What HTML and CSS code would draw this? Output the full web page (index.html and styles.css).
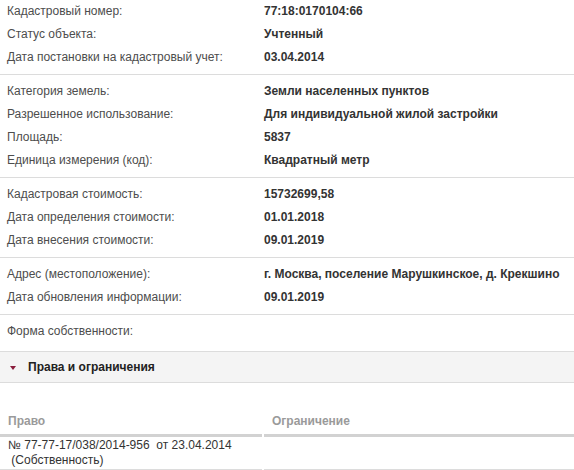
FILE: index.html
```html
<!DOCTYPE html>
<html lang="ru">
<head>
<meta charset="utf-8">
<title>Объект</title>
<link rel="stylesheet" href="styles.css">
</head>
<body>
<div class="info">
  <div class="group first">
    <div class="row"><span class="label">Кадастровый номер:</span><span class="value">77:18:0170104:66</span></div>
    <div class="row"><span class="label">Статус объекта:</span><span class="value">Учтенный</span></div>
    <div class="row"><span class="label">Дата постановки на кадастровый учет:</span><span class="value">03.04.2014</span></div>
  </div>
  <div class="group">
    <div class="row"><span class="label">Категория земель:</span><span class="value">Земли населенных пунктов</span></div>
    <div class="row"><span class="label">Разрешенное использование:</span><span class="value">Для индивидуальной жилой застройки</span></div>
    <div class="row"><span class="label">Площадь:</span><span class="value">5837</span></div>
    <div class="row"><span class="label">Единица измерения (код):</span><span class="value">Квадратный метр</span></div>
  </div>
  <div class="group">
    <div class="row"><span class="label">Кадастровая стоимость:</span><span class="value">15732699,58</span></div>
    <div class="row"><span class="label">Дата определения стоимости:</span><span class="value">01.01.2018</span></div>
    <div class="row"><span class="label">Дата внесения стоимости:</span><span class="value">09.01.2019</span></div>
  </div>
  <div class="group">
    <div class="row"><span class="label">Адрес (местоположение):</span><span class="value">г. Москва, поселение Марушкинское, д. Крекшино</span></div>
    <div class="row"><span class="label">Дата обновления информации:</span><span class="value">09.01.2019</span></div>
  </div>
  <div class="group last">
    <div class="row"><span class="label">Форма собственности:</span><span class="value"></span></div>
  </div>
</div>
<div class="section-head">
  <span class="caret"></span>
  <span class="section-title">Права и ограничения</span>
</div>
<div class="rights">
  <div class="th">Право</div>
  <div class="th">Ограничение</div>
  <div class="td">№ 77-77-17/038/2014-956&nbsp; от 23.04.2014<br>&nbsp;(Собственность)</div>
  <div class="td"></div>
</div>
</body>
</html>
```

FILE: styles.css
```css
html, body {
  margin: 0;
  padding: 0;
  background: #fff;
}
body {
  font-family: "Liberation Sans", Arial, sans-serif;
  font-size: 12px;
  color: #333;
  width: 574px;
}
.group {
  padding: 5px 0;
  border-bottom: 1px solid #dcdcdc;
}
.group.first {
  padding-top: 0;
}
.group.last {
  border-bottom: none;
  padding-bottom: 0;
}
.row {
  display: grid;
  grid-template-columns: 257px 1fr;
  padding-left: 7px;
  line-height: 23px;
  height: 23px;
}
.label {
  color: #4d4d4d;
}
.value {
  font-weight: bold;
  color: #333;
}
.section-head {
  margin-top: 8px;
  height: 30px;
  background: #f4f4f4;
  border-top: 1px solid #dcdcdc;
  border-bottom: 1px solid #dcdcdc;
  display: flex;
  align-items: center;
  padding-left: 10px;
}
.caret {
  width: 0;
  height: 0;
  border-left: 3.5px solid transparent;
  border-right: 3.5px solid transparent;
  border-top: 4px solid #8a1c3c;
  margin-right: 12px;
  margin-top: 1px;
}
.section-title {
  font-weight: bold;
  color: #222;
}
.rights {
  margin-top: 25px;
  display: grid;
  grid-template-columns: 262px 1fr;
  column-gap: 2px;
}
.th {
  padding: 5px 8px;
  line-height: 16px;
  font-weight: bold;
  color: #9a9a9a;
  border-bottom: 3px solid #d2d2d2;
}
.td {
  padding: 1px 8px 1px;
  line-height: 15px;
  color: #333;
  border-bottom: 1px solid #dcdcdc;
}
```
